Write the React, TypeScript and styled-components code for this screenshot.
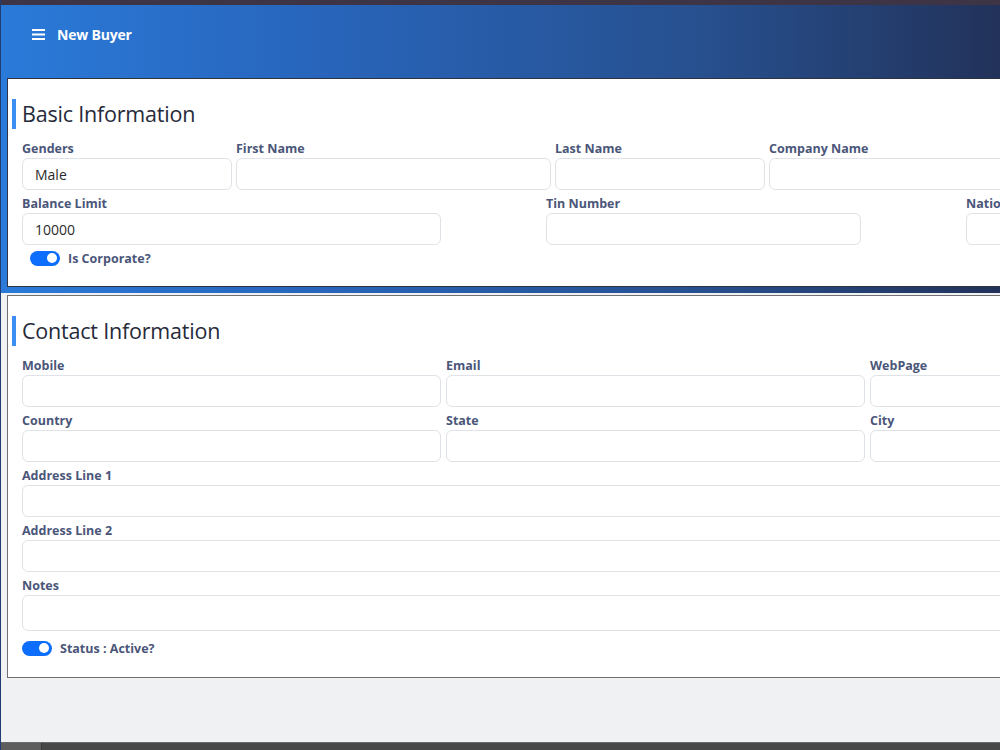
import React from 'react';
import styled, { createGlobalStyle } from 'styled-components';

const GlobalStyle = createGlobalStyle`
  html, body {
    margin: 0;
    padding: 0;
    background: #f0f1f3;
    font-family: "Open Sans", "Noto Sans", Arial, sans-serif;
  }
  * { box-sizing: border-box; }
`;

const Page = styled.div`
  width: 1000px;
  height: 750px;
  overflow: hidden;
  display: flex;
  flex-direction: column;
  border-left: 1px solid #1f3d72;
  background: #f0f1f3;
`;

const TopStrip = styled.div`
  height: 5px;
  flex: none;
  background: #3d3545;
`;

const Hero = styled.div`
  flex: none;
  padding: 0 0 6px 6px;
  background: linear-gradient(90deg, #2a7ad9 0%, #2866bd 30%, #27508f 70%, #22325a 100%);
`;

const HeaderBar = styled.div`
  height: 73px;
  display: flex;
  align-items: center;
  gap: 12px;
  padding: 0 0 15px 25px;
  color: #ffffff;
`;

const HeaderTitle = styled.span`
  font-size: 14px;
  font-weight: 700;
  letter-spacing: -0.2px;
`;

const Main = styled.div`
  flex: 1;
  padding: 2px 0 0 6px;
`;

const Card = styled.section<{ $dark?: boolean; $bottom: number }>`
  width: 1320px;
  background: #ffffff;
  border: 1px solid ${(p) => (p.$dark ? '#2f3340' : '#707072')};
  padding: 20px 14px ${(p) => p.$bottom}px 14px;
`;

const SectionTitle = styled.h2`
  margin: 0 0 10px -10px;
  padding-left: 6px;
  border-left: 4px solid #3d8ef2;
  height: 30px;
  line-height: 30px;
  font-size: 21.5px;
  font-weight: 400;
  letter-spacing: -0.2px;
  color: #262a3a;
`;

const Rows = styled.div`
  display: flex;
  flex-direction: column;
  gap: 4px;
`;

const Row = styled.div<{ $cols: string; $gap: number }>`
  display: grid;
  grid-template-columns: ${(p) => p.$cols};
  column-gap: ${(p) => p.$gap}px;
`;

const Field = styled.div`
  display: flex;
  flex-direction: column;
  min-width: 0;
`;

const Label = styled.label`
  height: 19px;
  line-height: 19px;
  font-size: 12.5px;
  font-weight: 700;
  color: #4a5679;
  white-space: nowrap;
`;

const Input = styled.input<{ $tall?: boolean }>`
  display: block;
  width: 100%;
  height: ${(p) => (p.$tall ? 36 : 32)}px;
  border: 1px solid #dfe2e6;
  border-radius: 6px;
  padding: 0 12px;
  font-family: inherit;
  font-size: 14px;
  color: #2b2b2b;
  background: #ffffff;
  outline: none;
`;

const SwitchRow = styled.label<{ $indent: number; $top: number }>`
  display: flex;
  align-items: center;
  gap: 8px;
  height: 16px;
  margin: ${(p) => p.$top}px 0 0 ${(p) => p.$indent}px;
  font-size: 12.5px;
  font-weight: 700;
  color: #4a5679;
`;

const Switch = styled.span`
  position: relative;
  width: 30px;
  height: 15px;
  border-radius: 8px;
  background: #0d6efd;
  flex: none;

  &::after {
    content: '';
    position: absolute;
    top: 2.5px;
    right: 3px;
    width: 10px;
    height: 10px;
    border-radius: 50%;
    background: #ffffff;
  }
`;

const FooterStrip = styled.div`
  height: 8px;
  flex: none;
  display: flex;
  background: #474747;
  border-top: 1px solid #6a6a6a;
`;

const FooterStart = styled.div`
  width: 41px;
  background: #5d5d5d;
  border-right: 1px solid #3a3a3a;
`;

const Hamburger = () => (
  <svg width="13" height="11" viewBox="0 0 13 11">
    <path d="M0 1h13M0 5.5h13M0 10h13" stroke="#ffffff" strokeWidth="2" />
  </svg>
);

type F = { label: string; value?: string; tall?: boolean };

const Fields = ({ cols, gap, fields }: { cols: string; gap: number; fields: F[] }) => (
  <Row $cols={cols} $gap={gap}>
    {fields.map((f) => (
      <Field key={f.label}>
        <Label>{f.label}</Label>
        <Input $tall={f.tall} defaultValue={f.value} />
      </Field>
    ))}
  </Row>
);

export default function App() {
  return (
    <>
      <GlobalStyle />
      <Page>
        <TopStrip />
        <Hero>
          <HeaderBar>
            <Hamburger />
            <HeaderTitle>New Buyer</HeaderTitle>
          </HeaderBar>
          <Card $dark $bottom={20}>
            <SectionTitle>Basic Information</SectionTitle>
            <Rows>
              <Fields
                cols="210px 315px 210px 1fr"
                gap={4}
                fields={[
                  { label: 'Genders', value: 'Male' },
                  { label: 'First Name' },
                  { label: 'Last Name' },
                  { label: 'Company Name' },
                ]}
              />
              <Fields
                cols="419px 315px 1fr"
                gap={105}
                fields={[
                  { label: 'Balance Limit', value: '10000' },
                  { label: 'Tin Number' },
                  { label: 'Nationality' },
                ]}
              />
            </Rows>
            <SwitchRow $indent={8} $top={5}>
              <Switch />
              Is Corporate?
            </SwitchRow>
          </Card>
        </Hero>
        <Main>
          <Card $bottom={21}>
            <SectionTitle>Contact Information</SectionTitle>
            <Rows>
              <Fields
                cols="419px 419px 1fr"
                gap={5}
                fields={[{ label: 'Mobile' }, { label: 'Email' }, { label: 'WebPage' }]}
              />
              <Fields
                cols="419px 419px 1fr"
                gap={5}
                fields={[{ label: 'Country' }, { label: 'State' }, { label: 'City' }]}
              />
              <Fields cols="1fr" gap={0} fields={[{ label: 'Address Line 1' }]} />
              <Fields cols="1fr" gap={0} fields={[{ label: 'Address Line 2' }]} />
              <Fields cols="1fr" gap={0} fields={[{ label: 'Notes', tall: true }]} />
            </Rows>
            <SwitchRow $indent={0} $top={9}>
              <Switch />
              Status : Active?
            </SwitchRow>
          </Card>
        </Main>
        <FooterStrip>
          <FooterStart />
        </FooterStrip>
      </Page>
    </>
  );
}
